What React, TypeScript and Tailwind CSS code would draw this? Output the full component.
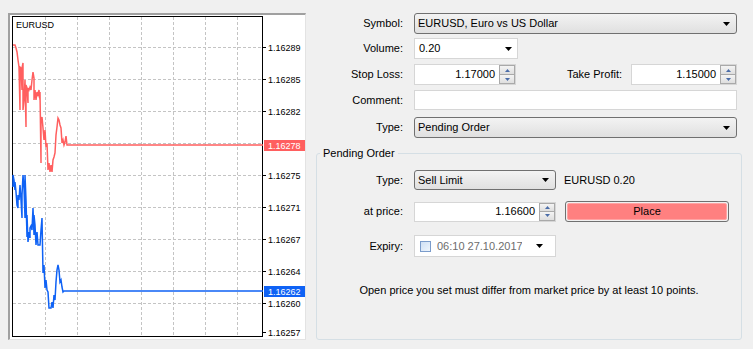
import React from 'react';

// chart traces in page coordinates (panel content starts at 10,15)
const RED =
  '13,45 15,45 16,48 17,52 18,60 19,67 20,110 20,67 21,68 22,90 22,68 23,63 23,110 24,100 25,80 26,127 26,85 27,88 28,103 28,88 29,90 30,87 31,90 32,80 33,72 34,78 34,100 35,90 36,100 37,92 38,95 39,90 40,100 40,92 41,163 41,120 42,117 43,128 44,140 45,130 46,147 47,143 48,170 49,163 50,172 51,165 52,172 53,160 54,157 55,153 56,135 57,127 58,118 59,120 60,125 61,128 62,143 63,140 64,145 65,142 66,136 67,145 263,145';
const BLUE =
  '13,187 13,175 14,180 15,190 15,182 16,192 17,205 18,208 18,195 19,200 20,185 21,200 22,218 22,195 23,175 24,188 25,218 25,175 26,200 27,237 27,215 28,242 29,232 30,238 30,228 31,226 32,230 33,208 34,235 34,215 35,225 36,245 37,232 38,245 40,245 41,230 42,218 43,273 44,265 45,288 46,280 47,290 48,292 49,308 51,308 52,302 53,308 54,295 55,300 56,282 57,270 58,265 59,270 60,282 61,280 62,287 63,292 64,291 263,291';

const H_GRID = [47, 79, 111, 143, 175, 207, 239, 271, 303];
const V_GRID = [45, 77, 109, 141, 173, 205, 237];
const PRICES: [string, number][] = [
  ['1.16289', 47],
  ['1.16285', 79],
  ['1.16282', 111],
  ['1.16275', 175],
  ['1.16271', 207],
  ['1.16267', 239],
  ['1.16264', 271],
  ['1.16260', 303],
  ['1.16257', 332],
];

const Chart = () => (
  <div className="ml-[8px] mt-[13px] w-[298px] h-[327px] shrink-0 bg-white border-l-2 border-t-2 border-r border-b border-l-[#a0a0a0] border-t-[#a0a0a0] border-r-[#e3e3e3] border-b-[#e3e3e3]">
    <svg width="295" height="324" viewBox="10 15 295 324" className="block" fontFamily="'Liberation Sans', Arial, sans-serif" fontSize="9">
      {H_GRID.map((y) => (
        <line key={y} x1="13" x2="262" y1={y + 0.5} y2={y + 0.5} stroke="#c4c4c4" strokeDasharray="3 2" />
      ))}
      {V_GRID.map((x) => (
        <line key={x} x1={x + 0.5} x2={x + 0.5} y1="17" y2="336" stroke="#c4c4c4" strokeDasharray="3 2" />
      ))}
      <rect x="12.5" y="16.5" width="250" height="320" fill="none" stroke="#000" />
      <text x="16" y="28" fill="#000">EURUSD</text>
      {PRICES.map(([p, y]) => (
        <g key={p}>
          <line x1="263" x2="266" y1={y + 0.5} y2={y + 0.5} stroke="#000" />
          <text x="268" y={y + 3.5} fill="#000">{p}</text>
        </g>
      ))}
      <polyline points={RED} fill="none" stroke="#ff5f5f" strokeWidth="1.5" />
      <polyline points={BLUE} fill="none" stroke="#0f62f5" strokeWidth="1.5" />
      <rect x="264" y="140" width="41" height="11" fill="#ff5f5f" />
      <text x="268" y="149" fill="#fff">1.16278</text>
      <rect x="264" y="286" width="41" height="11" fill="#0f62f5" />
      <text x="268" y="295" fill="#fff">1.16262</text>
    </svg>
  </div>
);

const Arrow = () => (
  <svg width="7" height="4" viewBox="0 0 7 4" className="shrink-0">
    <path d="M0 0H7L3.5 4Z" fill="#000" />
  </svg>
);

const Combo = ({ value }: { value: string }) => (
  <div className="flex items-center justify-between h-full rounded-[3px] border border-[#707070] bg-linear-to-b from-[#f3f3f3] to-[#e0e0e0] pl-[3px] pr-[6px]">
    <span>{value}</span>
    <Arrow />
  </div>
);

const WhiteCombo = ({ value }: { value: string }) => (
  <div className="flex items-center justify-between h-full bg-white border border-[#d6d6d6] pl-[4px] pr-[5px]">
    <span>{value}</span>
    <Arrow />
  </div>
);

const SpinHalf = ({ up }: { up?: boolean }) => (
  <div className="flex-1 flex items-center justify-center bg-linear-to-b from-[#f4f4f4] to-[#dedede]">
    <svg width="5" height="3" viewBox="0 0 5 3">
      <path d={up ? 'M0 3H5L2.5 0Z' : 'M0 0H5L2.5 3Z'} fill="#4a6ca8" />
    </svg>
  </div>
);

const Spinner = ({ value }: { value: string }) => (
  <div className="flex items-stretch h-full bg-white border border-[#d6d6d6]">
    <span className="flex-1 flex items-center justify-end pr-[4px]">{value}</span>
    <div className="flex flex-col w-[16px] border border-[#a9a9a9] gap-px bg-[#a9a9a9]">
      <SpinHalf up />
      <SpinHalf />
    </div>
  </div>
);

const Row = ({ label, lw, className, children }: { label: string; lw: string; className: string; children: React.ReactNode }) => (
  <div className={`flex ${className}`}>
    <div className={`${lw} shrink-0 flex items-center justify-end mr-[11px]`}>{label}</div>
    {children}
  </div>
);

export default function App() {
  return (
    <div className="w-[753px] h-[349px] overflow-hidden bg-[#f0f0f0] flex text-[11px] leading-[13px] text-black font-['Liberation_Sans',Arial,sans-serif]">
      <Chart />
      <div className="ml-[10px] w-[426px] flex flex-col">
        <div className="mt-[13px] w-[421px] flex flex-col">
          <Row label="Symbol:" lw="w-[87px]" className="h-[21px]">
            <div className="flex-1">
              <Combo value="EURUSD, Euro vs US Dollar" />
            </div>
          </Row>

          <Row label="Volume:" lw="w-[87px]" className="h-[21px] mt-[4px]">
            <div className="w-[104px]">
              <WhiteCombo value="0.20" />
            </div>
          </Row>

          <Row label="Stop Loss:" lw="w-[87px]" className="h-[21px] mt-[5px]">
            <div className="w-[102px]">
              <Spinner value="1.17000" />
            </div>
            <div className="flex-1 flex items-center justify-end">Take Profit:</div>
            <div className="w-[106px] ml-[9px]">
              <Spinner value="1.15000" />
            </div>
          </Row>

          <Row label="Comment:" lw="w-[87px]" className="h-[20px] mt-[5px]">
            <div className="flex-1 bg-white border border-[#d6d6d6]" />
          </Row>

          <Row label="Type:" lw="w-[87px]" className="h-[21px] mt-[7px]">
            <div className="flex-1">
              <Combo value="Pending Order" />
            </div>
          </Row>
        </div>

        <div className="relative mt-[15px] h-[187px] border border-[#d5dfe5] rounded-[3px]">
          <span className="absolute -top-[7px] left-[3px] px-[3px] bg-[#f0f0f0]">Pending Order</span>
          <div className="pt-[16px] flex flex-col">
            <Row label="Type:" lw="w-[86px]" className="h-[20px] items-center">
              <div className="w-[142px] h-full">
                <Combo value="Sell Limit" />
              </div>
              <span className="ml-[8px]">EURUSD 0.20</span>
            </Row>

            <Row label="at price:" lw="w-[86px]" className="h-[21px] mt-[11px] items-center">
              <div className="w-[142px] h-[20px]">
                <Spinner value="1.16600" />
              </div>
              <button className="ml-[9px] w-[164px] h-[21px] rounded-[3px] border border-[#707070] p-px">
                <div className="h-full flex items-center justify-center bg-[#ff8080] border border-[#ffa4a4] rounded-[2px]">Place</div>
              </button>
            </Row>

            <Row label="Expiry:" lw="w-[86px]" className="h-[22px] mt-[13px]">
              <div className="w-[142px] flex items-center bg-white border border-[#d6d6d6] pl-[5px] pr-[12px]">
                <div className="w-[11px] h-[11px] shrink-0 border border-[#7b9ccb] bg-linear-to-br from-[#cfe0f5] to-[#eef5fc]" />
                <span className="ml-[6px] w-[85px] overflow-hidden whitespace-nowrap text-[#6d6d6d]">06:10 27.10.2017</span>
                <span className="ml-auto flex"><Arrow /></span>
              </div>
            </Row>
          </div>
          <p className="mt-[27px] text-center">Open price you set must differ from market price by at least 10 points.</p>
        </div>
      </div>
    </div>
  );
}
